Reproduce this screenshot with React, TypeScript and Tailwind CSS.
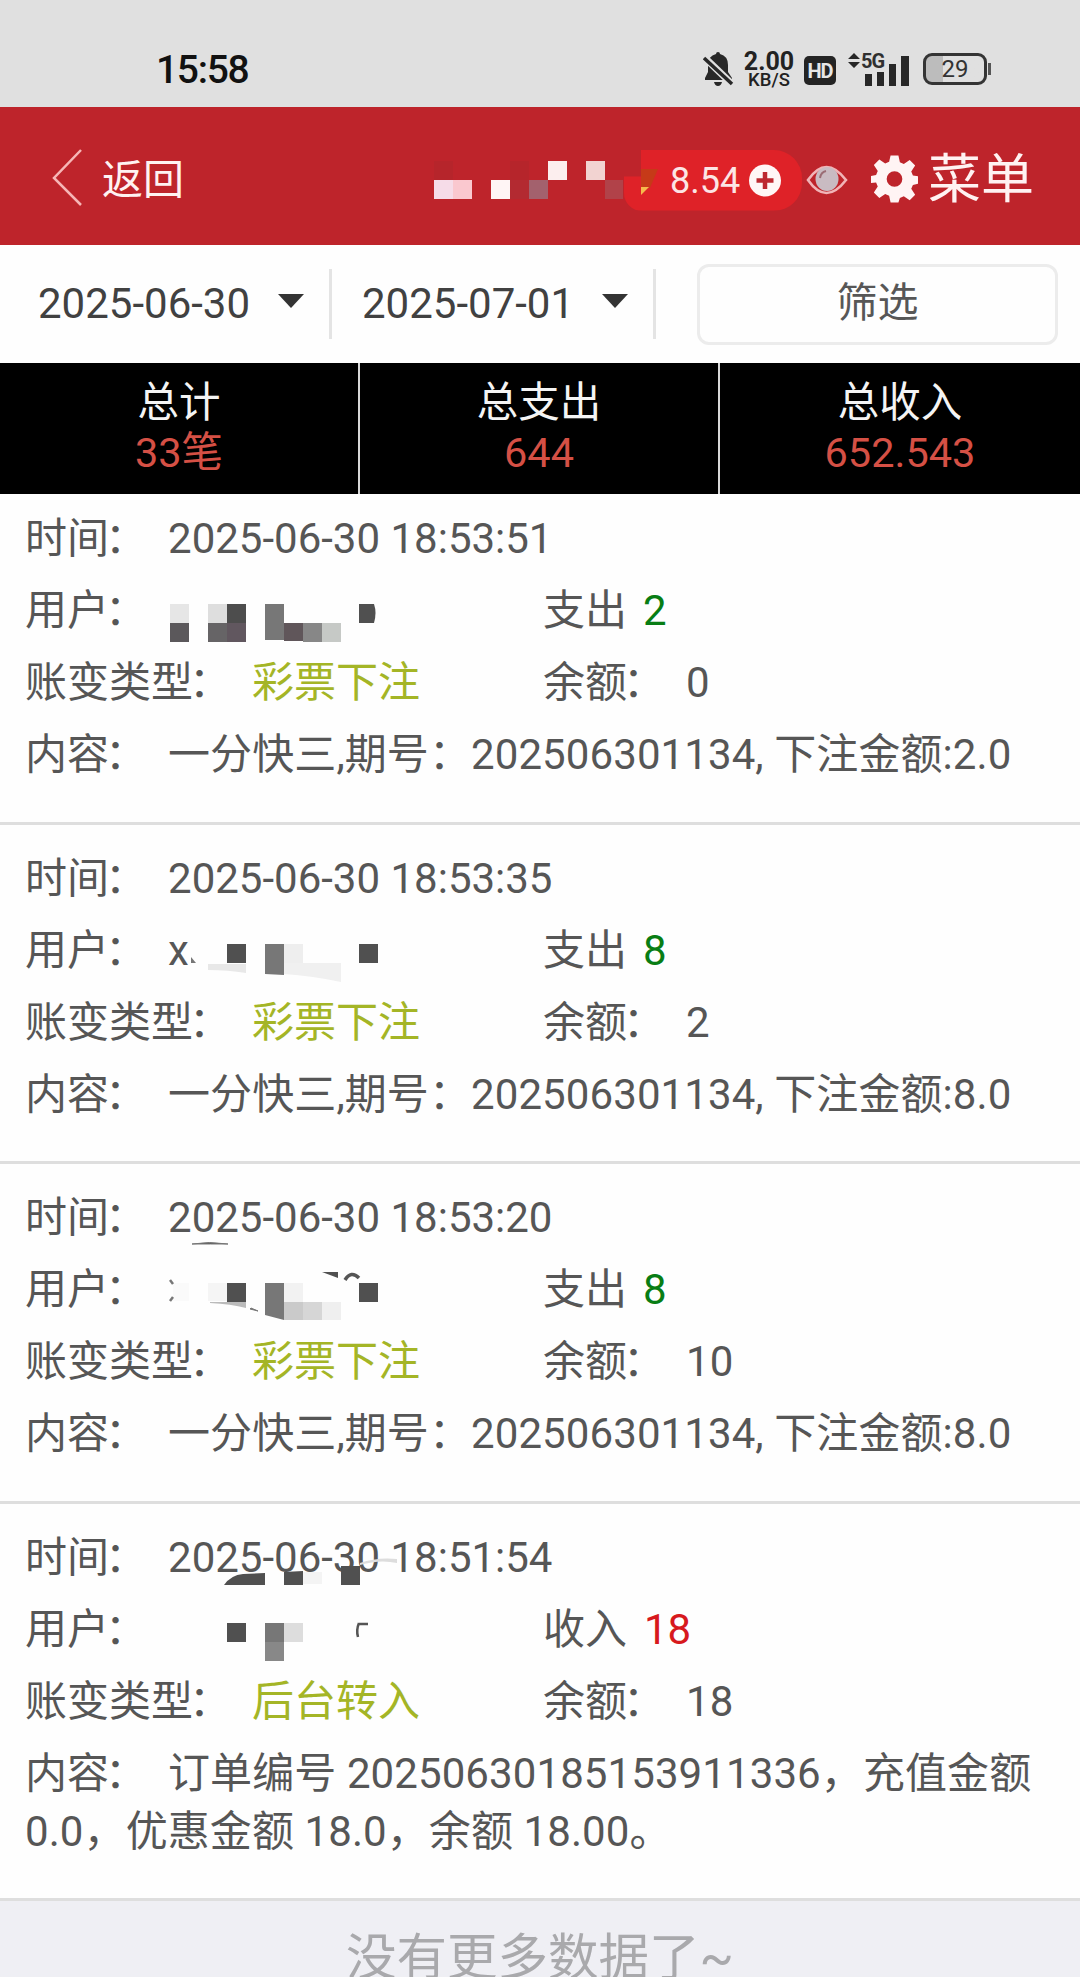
import React from "react";

type Cell = [x: number, y: number, w: number, h: number, color: string];

function Mosaic({ cells, children, className }: { cells: Cell[]; children?: React.ReactNode; className: string }) {
  return (
    <svg className={className} viewBox="0 0 200 110" shapeRendering="crispEdges" aria-hidden="true">
      {cells.map(([x, y, w, h, color], i) => (
        <rect key={i} x={x} y={y} width={w} height={h} fill={color} />
      ))}
      <g shapeRendering="auto">{children}</g>
    </svg>
  );
}

// The mask overlay of each user name reaches into the row above it.
const mask = "absolute left-0 -top-[22px] h-[110px] w-[200px]";

const mask1 = (
  <Mosaic
    className={mask}
    cells={[
      [2, 44, 19, 19, "#e6e6e6"],
      [2, 63, 19, 19, "#5b585b"],
      [40, 44, 19, 19, "#dedede"],
      [59, 44, 19, 19, "#4d4d4d"],
      [40, 63, 19, 19, "#666466"],
      [59, 63, 19, 19, "#61575f"],
      [97, 44, 19, 36, "#777777"],
      [116, 63, 19, 18, "#60565a"],
      [135, 63, 19, 19, "#878787"],
      [154, 63, 19, 19, "#c6c9c6"],
    ]}
  >
    <path d="M191 44h15q3 9 0 19h-15z" fill="#505050" />
  </Mosaic>
);

const mask2 = (
  <Mosaic
    className={mask}
    cells={[
      [59, 44, 19, 19, "#505050"],
      [116, 44, 19, 19, "#eeeeee"],
      [191, 44, 19, 19, "#505050"],
    ]}
  >
    <path d="M40 64h38v9q-18-3-38-3z" fill="#e8e8e8" />
    <path d="M97 44h19v31l-19-1z" fill="#777" />
    <path d="M116 63h57v19q-28-6-57-8z" fill="#f0f0f0" />
    <path d="M23 63v-6l5 6z" fill="#777" />
  </Mosaic>
);

const mask3 = (
  <Mosaic
    className={mask}
    cells={[
      [5, 44, 16, 18, "#fafafa"],
      [40, 44, 19, 18, "#f5f5f5"],
      [59, 44, 19, 19, "#505050"],
      [116, 44, 19, 19, "#f2f2f2"],
      [116, 63, 19, 18, "#cacaca"],
      [135, 63, 19, 18, "#d6d6d6"],
      [154, 63, 19, 18, "#efefef"],
      [191, 44, 19, 19, "#505050"],
    ]}
  >
    <path d="M97 44h19v37l-19-5z" fill="#777" />
    <path d="M42 63h36v6q-15-4-36-5z" fill="#bbb" />
    <path d="M83 69l7 3-8-2z" fill="#666" stroke="#777" />
    <path d="M2 41l3 4M2 62l3-4" stroke="#777" strokeWidth="2.5" />
    <path d="M24 5q17-3 36 0-17 0-36 0z" fill="#555" stroke="#777" />
    <path d="M154 33h16v6z" fill="#505050" />
    <path d="M177 41q6-10 14-2" fill="none" stroke="#555" strokeWidth="3.5" />
  </Mosaic>
);

const mask4 = (
  <Mosaic
    className={mask}
    cells={[
      [59, 44, 19, 19, "#505050"],
      [97, 44, 19, 19, "#777777"],
      [97, 63, 19, 19, "#888888"],
      [116, 44, 19, 19, "#dddddd"],
      [135, -7, 19, 12, "#f4f4f4"],
      [173, -13, 19, 19, "#505050"],
    ]}
  >
    <path d="M56 6q7-10 19-11l22-1V6z" fill="#505050" />
    <path d="M116-7l19-1V6h-19z" fill="#505050" />
    <path d="M191 44q-3 7-1 14M191 45h9" fill="none" stroke="#555" strokeWidth="2.5" />
    <path d="M192-14q20-6 37-2v-4q-20-2-37 4z" fill="#ddd" />
  </Mosaic>
);

type RecordItem = {
  time: string;
  user?: string;
  mask: React.ReactNode;
  kind: string;
  amount: string;
  income?: boolean;
  type: string;
  balance: string;
  content: string;
};

const records: RecordItem[] = [
  { time: "2025-06-30 18:53:51", mask: mask1, kind: "支出", amount: "2", type: "彩票下注", balance: "0", content: "一分快三,期号：202506301134, 下注金额:2.0" },
  { time: "2025-06-30 18:53:35", user: "x", mask: mask2, kind: "支出", amount: "8", type: "彩票下注", balance: "2", content: "一分快三,期号：202506301134, 下注金额:8.0" },
  { time: "2025-06-30 18:53:20", mask: mask3, kind: "支出", amount: "8", type: "彩票下注", balance: "10", content: "一分快三,期号：202506301134, 下注金额:8.0" },
  { time: "2025-06-30 18:51:54", mask: mask4, kind: "收入", amount: "18", income: true, type: "后台转入", balance: "18", content: "订单编号 20250630185153911336，充值金额 0.0，优惠金额 18.0，余额 18.00。" },
];

function Label({ children }: { children: string }) {
  return (
    <span className="mr-[21px] tracking-normal">
      {children}
      <span className="-ml-[4px]">：</span>
    </span>
  );
}

function Record({ item }: { item: RecordItem }) {
  return (
    <article className="border-b-[3px] border-[#dedede] bg-[#fefefe] pt-[25px] pr-3 pb-[37.5px] pl-[25px] text-[42px] leading-[58px] text-[#565656] first:pt-[16px]">
      <div className="mb-[14px] flex">
        <Label>时间</Label>
        <span>{item.time}</span>
      </div>
      <div className="mb-[14px] flex">
        <div className="flex w-[518px]">
          <Label>用户</Label>
          <span className="relative flex-1">
            {item.user}
            <span className="absolute top-0 left-0 block [&>svg]:overflow-visible">{item.mask}</span>
          </span>
        </div>
        <span>{item.kind}</span>
        <span className={item.income ? "ml-[17px] text-[#d7191d]" : "ml-[16px] text-[#087d14]"}>{item.amount}</span>
      </div>
      <div className="mb-[14px] flex">
        <div className="flex w-[518px]">
          <Label>账变类型</Label>
          <span className="text-[#a4b526]">{item.type}</span>
        </div>
        <Label>余额</Label>
        <span>{item.balance}</span>
      </div>
      <p className="tracking-[0.09px]">
        <Label>内容</Label>
        {item.content}
      </p>
    </article>
  );
}

function StatusBar() {
  return (
    <div className="flex h-[107px] items-center bg-[#e0e0e0] pt-[31px] pl-[156px]">
      <span className="w-[547px] pt-[2px] text-[39px] leading-none font-medium tracking-[-1.3px] text-[#111]">15:58</span>
      <svg className="h-[36px] w-[31px]" viewBox="0 0 31 36" fill="#282828">
        <path d="M13 3q0-2 2-2t2 2q8 2 8 11v7l4 6v2H2v-2l3-6v-7Q5 5 13 3zM11 31h8q-1 4-4 4t-4-4z" />
        <path d="M1 6l29 28" stroke="#e0e0e0" strokeWidth="7" />
        <path d="M1 7l28 26" stroke="#282828" strokeWidth="3.5" />
      </svg>
      <div className="ml-[9px] flex w-[52px] flex-col items-center pt-[2px] text-[#222]">
        <span className="text-[25px] leading-[20px] font-bold">2.00</span>
        <span className="text-[18.5px] leading-[17px] font-medium">KB/S</span>
      </div>
      <span className="mt-[2px] ml-[9px] flex h-[29px] w-[32px] items-center justify-center rounded-[5px] bg-[#242424] pt-px text-[20px] leading-none font-bold tracking-[-1px] text-[#e6e6e6]">
        HD
      </span>
      <div className="relative ml-[12px] h-[34px] w-[62px]">
        <svg className="h-[34px] w-[62px]" viewBox="0 0 62 34" fill="#272727">
          <path d="M0 7l6-6 6 6zM0 10h12l-6 6zM17 22h7v12h-7zM29 20h7v14h-7zM41 12h7v22h-7zM53 4h8v30h-8z" />
        </svg>
        <span className="absolute top-[-1px] left-[13px] text-[20px] leading-[20px] font-bold tracking-[-1px] text-[#303030]">5G</span>
      </div>
      <div className="ml-[13px] flex items-center">
        <span className="flex h-[32px] w-[64px] items-center justify-center rounded-[9px] border-[3px] border-[#343434] bg-linear-to-r from-[#bcbcbc] from-29% to-[#e0e0e0] to-29% text-[24px] leading-none text-[#333]">
          29
        </span>
        <span className="ml-px h-[12px] w-[3px] bg-[#555]" />
      </div>
    </div>
  );
}

function Header() {
  return (
    <header className="flex h-[138px] items-center bg-[#be242b] pl-[51px] text-[#fff2f2]">
      <svg className="mt-[2px] h-[58px] w-[32px]" viewBox="0 0 32 58" fill="none" stroke="#f7b6b6" strokeWidth="2.5">
        <path d="M30 2L3 30l27 27" />
      </svg>
      <span className="ml-[19px] w-[332px] pt-[9px] text-[41px] leading-none">返回</span>
      <svg className="mt-[7px] h-[38px] w-[190px]" viewBox="0 0 190 38" shapeRendering="crispEdges">
        <path fill="#b6252b" d="M0 0h19v19H0zM76 0h19v19H76z" />
        <path fill="#f6dce8" d="M0 19h19v19H0z" />
        <path fill="#fac8cf" d="M19 19h19v19H19z" />
        <path fill="#fff5f5" d="M57 19h19v19H57z" />
        <path fill="#b32a31" d="M76 19h19v19H76z" />
        <path fill="#a3616d" d="M95 19h19v19H95z" />
        <path fill="#fceeee" d="M114 0h19v19h-19z" />
        <path fill="#f2d3d1" d="M152 0h19v19h-19z" />
        <path fill="#b14249" d="M171 19h18v19h-18z" />
      </svg>
      <div className="mt-[8px] flex h-[61px] w-[178px] items-center rounded-r-[28px] rounded-bl-[18px] bg-[#df2228] [clip-path:polygon(17px_0,100%_0,100%_100%,0_100%,0_27px,17px_27px)]">
        <svg className="mt-[3px] ml-[17px] h-[27px] w-[17px]" viewBox="0 0 17 27">
          <path d="M0 1h17L9 20H0z" fill="#c63a18" />
          <path d="M0 19h8l-8 8z" fill="#f6ba4c" />
        </svg>
        <span className="ml-[12px] pt-[2px] text-[36px] leading-none text-[#fce5e5]">8.54</span>
        <svg className="ml-[9px] h-[33px] w-[32px]" viewBox="0 0 32 33">
          <circle cx="16" cy="16.5" r="16" fill="#fff6f6" />
          <path d="M16 8v17M7.500 16.500h17" stroke="#bd2830" strokeWidth="4.500" />
        </svg>
      </div>
      <svg className="mt-[8px] ml-[4px] h-[30px] w-[42px]" viewBox="0 0 42 30">
        <path d="M2 15Q20-11 40 15 20 41 2 15z" fill="none" stroke="#f1b4b7" strokeWidth="2.6" />
        <ellipse cx="21" cy="14" rx="11.5" ry="12" fill="#c9bbc2" />
        <path d="M14 13q1-6 6-7" fill="none" stroke="#9a6c74" strokeWidth="2" />
      </svg>
      <svg className="mt-[6px] ml-[23px] h-[48px] w-[47px]" viewBox="0 0 48 48" fill="#fff4f4">
        <path
          fillRule="evenodd"
          d="M20 0h8l1.500 7 4 1.700 6-4 5.600 5.600-4 6 1.700 4 6.200 1.200v7l-6.200 1.500-1.700 4 4 6-5.600 5.600-6-4-4 1.700L28 48h-8l-1.500-7-4-1.700-6 4-5.600-5.600 4-6-1.700-4L0 28v-7l5.200-1.200 1.700-4-4-6 5.600-5.600 6 4 4-1.700zM24 16a8 8 0 1 0 0 16 8 8 0 0 0 0-16z"
        />
      </svg>
      <span className="ml-[10px] pt-[8px] text-[53px] leading-none whitespace-nowrap">菜单</span>
    </header>
  );
}

function DateSelect({ value }: { value: string }) {
  return (
    <div className="flex h-[70px] w-[324px] items-center border-r-[3px] border-[#e4e4e4] pl-[30px] text-[42px] leading-none text-[#414141]">
      <span className="w-[211px] whitespace-nowrap">{value}</span>
      <svg className="-mt-[6px] ml-[29px] h-[14px] w-[26px]" viewBox="0 0 26 14">
        <path d="M0 0h26L13 14z" fill="#333" />
      </svg>
    </div>
  );
}

const totals = [
  ["总计", "33笔"],
  ["总支出", "644"],
  ["总收入", "652.543"],
];

export default function App() {
  return (
    <div className="h-[1977px] w-[1080px] overflow-hidden bg-[#efeff4] font-[Roboto,'Noto_Sans_CJK_SC',sans-serif]">
      <StatusBar />
      <Header />
      <div className="flex h-[118px] items-center bg-[#fefefe] pl-[8px]">
        <DateSelect value="2025-06-30" />
        <DateSelect value="2025-07-01" />
        <button className="ml-[41px] flex h-[81px] w-[361px] items-center justify-center rounded-[12px] border-[3px] border-[#ececec] pb-[2px] text-[41px] leading-none text-[#575757]">
          筛选
        </button>
      </div>
      <div className="grid h-[131px] grid-cols-3 divide-x-2 divide-[#d8d8d8] bg-black text-center text-[41.5px] leading-[50px]">
        {totals.map(([label, value]) => (
          <div key={label} className="pt-[15px]">
            <div className="text-[#f4f4f4]">{label}</div>
            <div className="text-[#d55045]">{value}</div>
          </div>
        ))}
      </div>
      <main>
        {records.map((item) => (
          <Record key={item.time} item={item} />
        ))}
      </main>
      <footer className="pt-[22px] text-center text-[50.5px] leading-[70px] whitespace-nowrap text-[#a9a9ac]">没有更多数据了~</footer>
    </div>
  );
}
